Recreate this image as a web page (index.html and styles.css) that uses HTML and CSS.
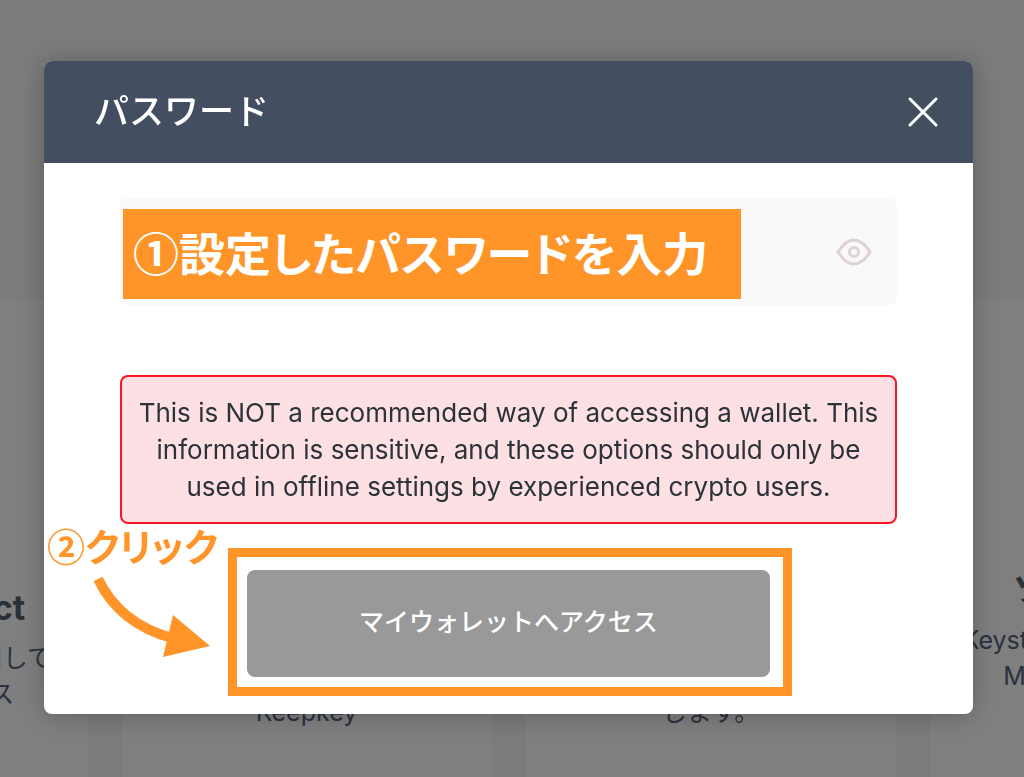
FILE: index.html
```html
<!DOCTYPE html>
<html lang="ja">
<head>
  <meta charset="utf-8">
  <meta name="viewport" content="width=device-width, initial-scale=1">
  <title>パスワード</title>
  <link rel="stylesheet" href="styles.css">
</head>
<body>
  <div class="page">
    <div class="hero"></div>
    <div class="cards">
      <div class="card">
        <h3>WalletConnect</h3>
        <p>モバイルアプリを使用して<br>ウォレットアクセス</p>
      </div>
      <div class="card">
        <h3>ハードウェア</h3>
        <p>Ledger wallet,<br>Trezor, BitBox,<br>Keepkey</p>
      </div>
      <div class="card">
        <h3>MEW CX</h3>
        <p>拡張機能を使用して<br>ウォレットにアクセス<br>します。</p>
      </div>
      <div class="card">
        <h3>ソフトウェア</h3>
        <p>Keystoreファイル、秘密鍵<br>Mnemonicフレーズ<br>など</p>
      </div>
    </div>
  </div>

  <div class="overlay">
    <div class="modal" role="dialog" aria-labelledby="modal-title">
      <div class="modal-header">
        <h2 id="modal-title">パスワード</h2>
        <button class="close" type="button" aria-label="閉じる">
          <svg width="32" height="32" viewBox="0 0 32 32" fill="none" stroke="#fff" stroke-width="3" stroke-linecap="round"><path d="M3 3l26 26M29 3L3 29"/></svg>
        </button>
      </div>
      <form class="modal-body">
        <div class="field">
          <input type="password" aria-label="パスワード">
          <button class="eye" type="button" aria-label="パスワードを表示">
            <svg width="36" height="28" viewBox="0 0 36 28" fill="none" stroke="#dfd2d5" stroke-width="3"><path d="M2 14C7 6 12 2 18 2s11 4 16 12c-5 8-10 12-16 12S7 22 2 14z"/><circle cx="18" cy="14" r="4.500"/></svg>
          </button>
          <span class="note note-input">①設定したパスワードを入力</span>
        </div>
        <p class="warning">This is NOT a recommended way of accessing a wallet. This information is sensitive, and these options should only be used in offline settings by experienced crypto users.</p>
        <div class="action">
          <button class="submit" type="button">マイウォレットへアクセス</button>
          <span class="highlight"></span>
        </div>
      </form>
      <span class="note note-click">②クリック</span>
      <svg class="arrow" width="120" height="88" viewBox="0 0 120 88"><path d="M6 5Q28 50 80 64" fill="none" stroke="#ff9429" stroke-width="10"/><path d="M81 41l37 31-47 11z" fill="#ff9429"/></svg>
    </div>
  </div>
</body>
</html>
```
FILE: styles.css
```css
* {
  box-sizing: border-box;
}

body,
h2,
h3,
p {
  margin: 0;
}

body,
button,
input {
  font-family: Inter, "Noto Sans CJK JP", sans-serif;
}

button {
  padding: 0;
  border: 0;
  background: none;
  cursor: pointer;
}

svg {
  display: block;
}

/* page behind the dialog */
.page {
  height: 100vh;
  padding-right: 7px;
  overflow: hidden;
  background: #f7f7f7;
}
.hero {
  height: 300px;
}
.cards {
  display: flex;
  justify-content: center;
  gap: 34px;
}
.card {
  display: flex;
  flex: 0 0 370px;
  flex-direction: column;
  justify-content: center;
  height: 696px;
  background: #fff;
  text-align: center;
  white-space: nowrap;
}
.card h3 {
  margin-bottom: 8px;
  color: #565e6c;
  font-size: 34px;
  line-height: 48px;
}
.card p {
  color: #56657c;
  font-size: 25px;
  line-height: 36px;
}

/* dialog */
.overlay {
  position: fixed;
  inset: 0;
  padding: 61px 51px 61px 44px;
  background: rgba(0, 0, 0, .5);
}
.modal {
  position: relative;
  max-width: 930px;
  margin: 0 auto;
  border-radius: 8px;
  background: #fff;
  box-shadow: 0 2px 24px rgba(0, 0, 0, .25);
}
.modal-header {
  display: flex;
  align-items: center;
  justify-content: space-between;
  height: 102px;
  padding: 0 34px 0 50px;
  border-radius: 8px 8px 0 0;
  background: #434e60;
}
.modal-header h2 {
  padding-bottom: 8px;
  color: #fff;
  font-size: 35px;
  font-weight: 500;
}
.modal-body {
  padding: 35px 76px 37px;
}

.field {
  display: flex;
  position: relative;
  height: 107px;
  padding-right: 25px;
  border-radius: 8px;
  background: #f9f9f9;
}
.field input {
  flex: 1;
  min-width: 0;
  padding: 0 30px;
  border: 0;
  outline: 0;
  background: none;
  font-size: 26px;
}

.warning {
  margin: 70px 0 46px;
  padding: 17px 16px;
  border: 2px solid #fc1522;
  border-radius: 8px;
  background: #fce0e3;
  color: #2b3238;
  font-size: 26px;
  line-height: 37px;
  text-align: center;
}

.action {
  position: relative;
  max-width: 523px;
  margin: 0 auto;
}
.submit {
  width: 100%;
  height: 107px;
  padding-bottom: 8px;
  border-radius: 8px;
  background: #999;
  color: #fff;
  font-size: 25px;
  font-weight: 500;
}

/* step notes */
.note {
  position: absolute;
  font-feature-settings: "palt";
  font-family: "Noto Sans CJK JP", sans-serif;
  font-weight: 700;
  white-space: nowrap;
}
.note-input {
  top: 11px;
  left: 3px;
  width: 618px;
  padding: 0 0 6px 10px;
  background: #ff9429;
  color: #fff;
  font-size: 46px;
  line-height: 84px;
}
.note-click {
  top: 460px;
  left: 3px;
  color: #ff9429;
  font-size: 38px;
  line-height: 48px;
}
.highlight {
  position: absolute;
  inset: -22px -22px -19px -19px;
  border: 9px solid #ff9429;
  pointer-events: none;
}
.arrow {
  position: absolute;
  top: 513px;
  left: 48px;
}
```
